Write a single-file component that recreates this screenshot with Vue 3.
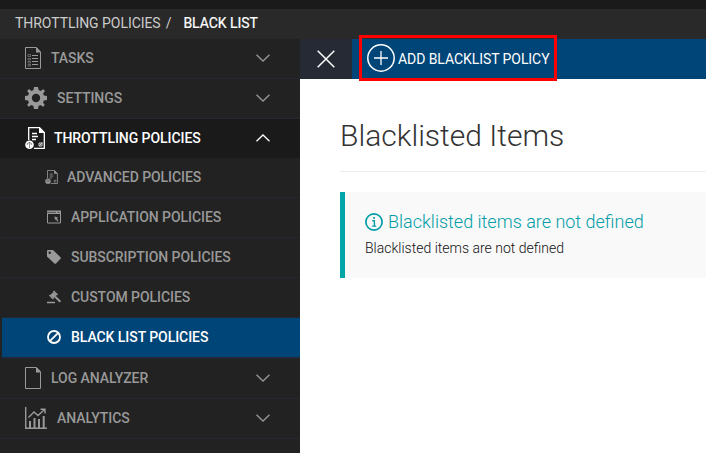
<script setup>
import { ref } from 'vue'

const topItems = [
  { id: 'tasks', label: 'TASKS', icon: 'tasks', w: 16 },
  { id: 'settings', label: 'SETTINGS', icon: 'gear', w: 22 },
  { id: 'throttling', label: 'THROTTLING POLICIES', icon: 'policy', w: 20, open: true },
]
const subItems = [
  { id: 'advanced', label: 'ADVANCED POLICIES', icon: 'policy', w: 13 },
  { id: 'application', label: 'APPLICATION POLICIES', icon: 'window', w: 14 },
  { id: 'subscription', label: 'SUBSCRIPTION POLICIES', icon: 'tag', w: 14 },
  { id: 'custom', label: 'CUSTOM POLICIES', icon: 'gavel', w: 14 },
  { id: 'blacklist', label: 'BLACK LIST POLICIES', icon: 'ban', w: 14 },
]
const bottomItems = [
  { id: 'log', label: 'LOG ANALYZER', icon: 'file', w: 16 },
  { id: 'analytics', label: 'ANALYTICS', icon: 'chart', w: 22 },
]
const active = ref('blacklist')
const rows = [
  ...topItems.map((i) => ({ ...i, level: 'top' })),
  ...subItems.map((i) => ({ ...i, level: 'sub' })),
  ...bottomItems.map((i) => ({ ...i, level: 'top' })),
]
const boxes = {
  tasks: '0 0 16 22',
  gear: '0 0 22 22',
  policy: '0 0 20 22',
  window: '0 0 14 13',
  tag: '0 0 14 14',
  gavel: '0 0 14 13',
  ban: '0 0 14 14',
  file: '0 0 16 22',
  chart: '0 0 22 22',
}
</script>

<template>
  <div class="page">
    <div class="topbar"></div>
    <nav class="crumbs">
      <span class="crumb">THROTTLING POLICIES</span><span class="slash">/</span>
      <span class="current">BLACK LIST</span>
    </nav>
    <div class="body">
      <aside class="sidebar">
        <a
          v-for="row in rows"
          :key="row.id"
          class="row"
          :class="[row.level, row.id, { open: row.open, active: row.id === active }]"
        >
          <svg class="icon" :style="{ width: row.w + 'px' }" :viewBox="boxes[row.icon]" fill="none" stroke="currentColor">
            <g v-if="row.icon === 'tasks'">
              <path d="M.5.5H11.5L15.5 5V21.5H.5Z" />
              <path d="M11 0L16 5.5H11Z" fill="currentColor" stroke="none" />
              <path d="M7 8.5H13M7 11.5H13M7 14.5H13M7 17.5H13" />
              <path d="M3 7.5H5.5V9.500H3ZM3 11.500H5.500V13H3ZM3 14.500H5.500V16H3ZM3 17.500H5.500V19H3Z" stroke-width=".7" opacity=".75" />
            </g>
            <g v-else-if="row.icon === 'gear'">
              <path
                fill="currentColor"
                stroke="none"
                fill-rule="evenodd"
                d="M9 0H13L13.600 3.100L15.600 4L18.200 2.200L20 4L18.100 6.500L18.900 8.500L22 9V13L18.900 13.600L18 15.600L19.800 18.100L18 19.800L15.500 18L13.500 18.900L13 22H9L8.400 18.900L6.400 18L3.900 19.800L2.100 18L3.900 15.500L3.100 13.500L0 13V9L3.100 8.400L4 6.400L2.200 3.900L4 2.100L6.500 4L8.500 3.100ZM11 6.800A4.200 4.200 0 1 0 11 15.200A4.200 4.200 0 1 0 11 6.800Z"
              />
            </g>
            <g v-else-if="row.icon === 'policy'">
              <path d="M3.700 13V.7H14.500L19.300 5.500V21.300H9" stroke-width="1.300" />
              <path d="M14 0L20 6H14Z" fill="currentColor" stroke="none" />
              <path d="M7 6.500H12M7 9.500H13M7 12.500H11" stroke-width="1.300" />
              <path d="M14 16H17V19H14ZM14.500 18.500L17.500 15.500" stroke-width=".8" />
              <circle cx="4.500" cy="17.700" r="4.300" fill="currentColor" stroke="none" />
              <path class="cut" d="M4.500 21V15.500M2.300 18V16.500Q4.500 14.500 6.700 16.500V18" stroke-width=".5" />
            </g>
            <g v-else-if="row.icon === 'window'">
              <path d="M.5 1V12.500H13.500V1" />
              <path d="M0 0H14V3.500H0Z" fill="currentColor" stroke="none" />
              <path class="cut" d="M0 1.900H9M10.500 1.900H12.500" stroke-width=".6" />
              <path d="M7.500 6L11 7L10 8L11.500 10.500L10.200 11L9 8.800L8 9.500Z" fill="currentColor" stroke="none" />
            </g>
            <path
              v-else-if="row.icon === 'tag'"
              fill="currentColor"
              stroke="none"
              fill-rule="evenodd"
              d="M0 1Q0 0 1 0H6L13.500 7.200Q14.300 8 13.500 8.800L9 13.500Q8.200 14.200 7.400 13.500L0 6.500ZM2.700 1.500A1.200 1.200 0 1 0 2.700 3.900A1.200 1.200 0 1 0 2.700 1.500Z"
            />
            <g v-else-if="row.icon === 'gavel'">
              <path d="M6.500.5L10.500 4.500M2.500 4.500L6.500 8.500" stroke-width="1.600" />
              <path d="M6.400 1.400L9.600 4.600L6.600 7.600L3.400 4.400Z" fill="currentColor" stroke="none" />
              <path d="M8 6L13.400 11.400" stroke-width="2" />
              <path d="M0 12H8" stroke-width="1.500" />
            </g>
            <g v-else-if="row.icon === 'ban'" stroke-width="1.800">
              <circle cx="7" cy="7" r="6" />
              <path d="M2.800 11.200L11.200 2.800" />
            </g>
            <g v-else-if="row.icon === 'file'">
              <path d="M.5.5H11.500L15.500 4.500V21.500H.5Z" />
              <path d="M11 0L16 5.500H11Z" fill="currentColor" stroke="none" />
            </g>
            <g v-else>
              <path d="M.7 0V21.200H22" stroke-width="1.400" />
              <path d="M5 21V14M9.500 21V11M14 21V12M18.700 21V9" stroke-width="2" />
              <path d="M3.500 10.500L9 5L13 8.500L19.500 2.500M15.500 2.200H20V6.500" stroke-width="1.400" />
            </g>
          </svg>
          <span class="label">{{ row.label }}</span>
          <svg v-if="row.level === 'top'" class="chevron" viewBox="0 0 14 8" fill="none" stroke="currentColor">
            <path :d="row.open ? 'M.5 7.300L7 1L13.500 7.300' : 'M.5.7L7 7L13.500.7'" stroke-width="1.300" />
          </svg>
        </a>
      </aside>
      <main class="content">
        <div class="toolbar">
          <button class="close" aria-label="Close">
            <svg viewBox="0 0 18 18" fill="none" stroke="currentColor"><path d="M.7.7L17.300 17.300M17.300.7L.7 17.300" stroke-width="1.500" /></svg>
          </button>
          <button class="add">
            <svg viewBox="0 0 28 28" fill="none" stroke="currentColor">
              <circle cx="14" cy="14" r="13.200" stroke-width="1.500" />
              <path d="M14 7V21M7 14H21" stroke-width="1.300" />
            </svg>
            <span>ADD BLACKLIST POLICY</span>
          </button>
        </div>
        <section class="panel">
          <h1><span>Blacklisted Items</span></h1>
          <div class="notice">
            <h2>
              <svg viewBox="0 0 18 18" fill="none" stroke="currentColor">
                <circle cx="9" cy="9" r="8.100" stroke-width="1.700" />
                <path d="M7.300 7.700H9.400V13M7.200 13.100H11.200" stroke-width="1.400" />
                <path d="M8.200 4H10V5.800H8.200Z" fill="currentColor" stroke="none" />
              </svg>
              <span>Blacklisted items are not defined</span>
            </h2>
            <p>Blacklisted items are not defined</p>
          </div>
        </section>
      </main>
    </div>
  </div>
</template>

<style>
body {
  margin: 0;
  background: #fff;
}
</style>

<style scoped>
.page {
  box-sizing: border-box;
  width: 706px;
  height: 453px;
  overflow: hidden;
  display: flex;
  flex-direction: column;
  font: 400 14px/20px Roboto, sans-serif;
  color: #333;
}
.topbar {
  flex: none;
  height: 9px;
  background: #1a1a1a;
}
.crumbs {
  flex: none;
  height: 30px;
  box-sizing: border-box;
  padding: 0 15px 2px;
  display: flex;
  align-items: center;
  background: #292929;
  color: #ccc;
  letter-spacing: -0.05px;
  white-space: nowrap;
}
.slash {
  margin: 0 12px 0 5px;
}
.current {
  color: #fff;
  -webkit-text-stroke: 0.2px #fff;
}
.body {
  flex: 1;
  display: flex;
  min-height: 0;
}
.sidebar {
  flex: none;
  width: 300px;
  background: #222;
  color: #999;
}
.row {
  height: 40px;
  box-sizing: border-box;
  padding: 0 30px 2px 25px;
  border-bottom: 1px solid #242835;
  display: flex;
  align-items: center;
  white-space: nowrap;
}
.icon {
  flex: none;
  height: 22px;
}
.label {
  margin-left: 10px;
  font-weight: 500;
  letter-spacing: -0.06px;
}
.chevron {
  width: 14px;
  height: 8px;
  margin-left: auto;
}
.open {
  height: 39px;
  padding-bottom: 1px;
  background: #1a1a1a;
  border-color: #1a1a1a;
  color: #fff;
}
.open .label {
  margin-left: 9px;
}
.sub {
  margin-left: 2px;
  padding-left: 45px;
}
.sub .icon {
  height: 14px;
}
.sub.advanced {
  margin-left: 0;
  padding-left: 45px;
}
.sub.advanced .label {
  margin-left: 9px;
}
.sub.active {
  background: #004578;
  color: #fff;
  height: 41px;
  border-bottom-width: 2px;
}
.cut {
  stroke: #222;
}
.content {
  flex: 1;
  min-width: 0;
  background: #fff;
}
.toolbar {
  height: 40px;
  display: flex;
  background: #004578;
}
button {
  border: 0;
  padding: 0;
  font: inherit;
  color: #fff;
  background: none;
}
.close {
  width: 52px;
  display: flex;
  align-items: center;
  justify-content: center;
  background: #252a35;
}
.close svg {
  width: 18px;
  height: 18px;
}
.add {
  box-sizing: border-box;
  width: 198px;
  height: 46px;
  margin: -4px 0 0 7px;
  border: 3px solid #f00;
  padding-left: 5px;
  display: flex;
  align-items: center;
  gap: 3px;
  letter-spacing: -0.07px;
  white-space: nowrap;
}
.add span {
  padding-top: 2px;
}
.add svg {
  flex: none;
  width: 28px;
  height: 28px;
}
.panel {
  padding-left: 40px;
}
h1 {
  margin: 0;
  height: 93px;
  box-sizing: border-box;
  padding-top: 39px;
  border-bottom: 1px solid #eee;
  font-size: 30px;
  line-height: 36px;
  font-weight: 300;
}
.notice {
  box-sizing: border-box;
  height: 86px;
  margin-top: 20px;
  padding: 19px 0 0 20px;
  border-left: 5px solid #00a5aa;
  background: #f9f9f9;
}
h2 {
  margin: 0;
  display: flex;
  align-items: center;
  gap: 5px;
  font-size: 18px;
  line-height: 22px;
  font-weight: 300;
  color: #009da7;
}
h2 svg {
  width: 18px;
  height: 18px;
}
p {
  margin: 5px 0 0;
  font-weight: 300;
  color: #111;
}
</style>
